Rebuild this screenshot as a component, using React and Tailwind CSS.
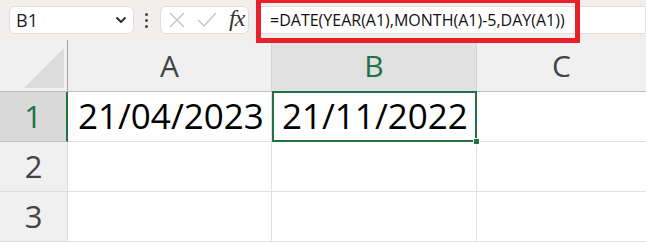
import React from 'react';

const font = { fontFamily: '"Open Sans", "Liberation Sans", sans-serif' };

function CancelIcon() {
  return (
    <svg width="16" height="16" viewBox="0 0 16 16" fill="none">
      <path d="M1 1L15 15M15 1L1 15" stroke="#c4c4c4" strokeWidth="1.4" />
    </svg>
  );
}

function CheckIcon() {
  return (
    <svg width="20" height="16" viewBox="0 0 20 16" fill="none">
      <path d="M1 8L7 14L19 1" stroke="#c4c4c4" strokeWidth="1.4" />
    </svg>
  );
}

function Toolbar() {
  return (
    <div className="relative flex items-center h-[40px] bg-[#f3eeee] pl-[9px]">
      <div className="flex items-center justify-between w-[125px] h-[28px] bg-white border border-[#e2dcdc] rounded-[6px] pl-[6px] pr-[6px]">
        <span className="text-[18px] text-[#222]">B1</span>
        <svg width="12" height="8" viewBox="0 0 12 8" fill="none">
          <path d="M1.5 1.5L6 6L10.5 1.5" stroke="#222" strokeWidth="1.8" />
        </svg>
      </div>
      <div className="flex flex-col gap-[3px] ml-[11px] mr-[12px]">
        <span className="w-[3px] h-[3px] bg-[#444] rounded-full" />
        <span className="w-[3px] h-[3px] bg-[#444] rounded-full" />
        <span className="w-[3px] h-[3px] bg-[#444] rounded-full" />
      </div>
      <div className="flex items-center w-[89px] h-[28px] bg-white border border-[#e2dcdc] rounded-[6px] pl-[8px] gap-[12px]">
        <CancelIcon />
        <CheckIcon />
        <span className="text-[24px] italic text-[#333] leading-none -mt-[4px] tracking-[-1px]" style={{ fontFamily: '"Liberation Serif", serif' }}>fx</span>
      </div>
      <div className="flex items-center flex-1 h-[28px] ml-[7px] bg-white border border-[#e2dcdc] rounded-l-[6px] pl-[13px]">
        <span className="text-[16px] text-[#111] whitespace-nowrap">=DATE(YEAR(A1),MONTH(A1)-5,DAY(A1))</span>
      </div>
      <div className="absolute left-[256px] top-[-2px] w-[324px] h-[45px] border-[5px] border-[#e8202a]" />
    </div>
  );
}

function HeaderRow() {
  return (
    <div className="flex h-[52px] bg-[#f0f0f0] border-b border-[#bdbdbd]">
      <div className="relative w-[68px] shrink-0 border-r border-[#a0a0a0]">
        <div className="absolute left-[24px] top-[8px] w-0 h-0 border-l-[40px] border-l-transparent border-b-[40px] border-b-[#dcdcdc]" />
      </div>
      <div className="flex items-center justify-center w-[204px] shrink-0 border-r border-[#d4d4d4] text-[30px] text-[#444]">A</div>
      <div className="flex items-center justify-center w-[205px] shrink-0 border-r border-[#d4d4d4] bg-[#e1e1e1] text-[30px] text-[#217346]">B</div>
      <div className="flex items-center justify-center flex-1 text-[30px] text-[#444]">C</div>
    </div>
  );
}

function Row({ num, selected, a, b }) {
  return (
    <div className="flex h-[50px]">
      <div className={selected
        ? "flex items-center justify-center w-[68px] shrink-0 bg-[#d9d9d9] border-r-2 border-r-[#217346] border-b border-[#bdbdbd] text-[31px] text-[#217346]"
        : "flex items-center justify-center w-[68px] shrink-0 bg-[#f0f0f0] border-r border-[#a0a0a0] border-b border-[#dcdcdc] text-[31px] text-[#444]"}>
        {num}
      </div>
      <div className="flex items-center w-[204px] shrink-0 bg-white border-r border-b border-[#e1e1e1] pl-[10px] text-[35px] text-black">{a}</div>
      {selected ? (
        <div className="relative flex items-center w-[205px] shrink-0 bg-white border-2 border-[#217346] -mt-px pl-[8px] text-[35px] text-black">
          {b}
          <div className="absolute right-[-5px] bottom-[-5px] w-[7px] h-[7px] bg-[#217346] border border-white" />
        </div>
      ) : (
        <div className="w-[205px] shrink-0 bg-white border-r border-b border-[#e1e1e1]" />
      )}
      <div className="flex-1 bg-white border-b border-[#e1e1e1]" />
    </div>
  );
}

export default function App() {
  return (
    <div className="w-[646px] h-[243px] overflow-hidden bg-white" style={font}>
      <Toolbar />
      <HeaderRow />
      <Row num="1" selected a="21/04/2023" b="21/11/2022" />
      <Row num="2" />
      <Row num="3" />
    </div>
  );
}
